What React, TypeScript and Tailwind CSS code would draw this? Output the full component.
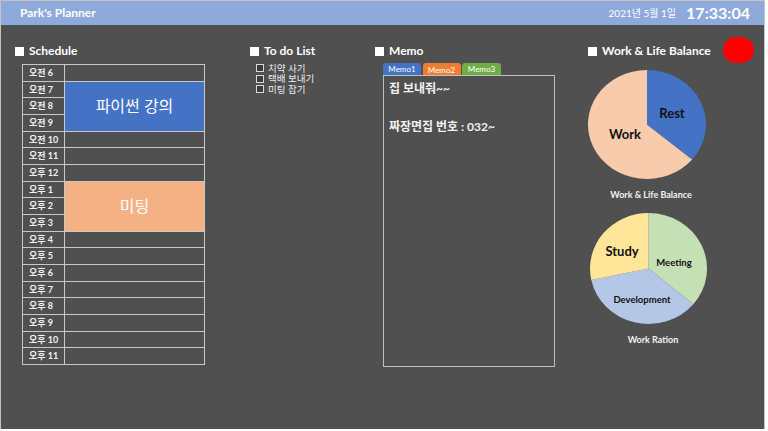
import React from "react";

const FONT = { fontFamily: 'Lato, "Noto Sans CJK KR", sans-serif' };

const times = [
  "오전 6", "오전 7", "오전 8", "오전 9", "오전 10", "오전 11", "오후 12",
  "오후 1", "오후 2", "오후 3", "오후 4", "오후 5", "오후 6", "오후 7",
  "오후 8", "오후 9", "오후 10", "오후 11",
];

function Heading({ text }: { text: string }) {
  return (
    <div className="flex h-[14px] items-center gap-[5px]">
      <div className="h-[9px] w-[9px] bg-white" />
      <span className="whitespace-nowrap text-[12px] font-bold leading-none text-white">{text}</span>
    </div>
  );
}

function Cell({ h = 1, children, className = "" }: { h?: number; children?: React.ReactNode; className?: string }) {
  return (
    <div
      className={`flex items-center justify-center border-b border-r border-[#c9c9c9] ${className}`}
      style={{ height: `${(50 / 3) * h}px` }}
    >
      {children}
    </div>
  );
}

function Schedule() {
  return (
    <div className="flex w-[249px] shrink-0 flex-col pl-[14px]">
      <Heading text="Schedule" />
      <div className="ml-[7px] mt-[6px] flex w-[183px] border-l border-t border-[#c9c9c9]">
        <div className="flex w-[42px] flex-col">
          {times.map((t) => (
            <div
              key={t}
              className="flex items-center border-b border-r border-[#c9c9c9] pl-[6px] text-[9px] font-bold text-[#f2f2f2]"
              style={{ height: `${50 / 3}px` }}
            >
              {t}
            </div>
          ))}
        </div>
        <div className="flex w-[140px] flex-col">
          <Cell />
          <Cell h={3} className="bg-[#4472c4]">
            <span className="text-[16px] text-white">파이썬 강의</span>
          </Cell>
          <Cell />
          <Cell />
          <Cell />
          <Cell h={3} className="bg-[#f4b183]">
            <span className="text-[16px] text-white">미팅</span>
          </Cell>
          {Array.from({ length: 8 }).map((_, i) => (
            <Cell key={i} />
          ))}
        </div>
      </div>
    </div>
  );
}

function Todo() {
  const items = ["치약 사기", "택배 보내기", "미팅 잡기"];
  return (
    <div className="flex w-[125px] shrink-0 flex-col">
      <Heading text="To do List" />
      <div className="ml-[6px] mt-[5px] flex flex-col">
        {items.map((it) => (
          <div key={it} className="flex h-[10.5px] items-center gap-[4px]">
            <div className="h-[8px] w-[8px] border border-[#d9d9d9] bg-[#3c3c3c]" />
            <span className="text-[9.5px] leading-none text-[#ededed]">{it}</span>
          </div>
        ))}
      </div>
    </div>
  );
}

function Memo() {
  return (
    <div className="flex w-[213px] shrink-0 flex-col">
      <Heading text="Memo" />
      <div className="ml-[8px] mt-[5px] flex gap-[1.5px]">
        <div className="flex h-[12px] w-[38px] items-center justify-center rounded-t-[3px] bg-[#4472c4] text-[8px] leading-none text-white">
          Memo1
        </div>
        <div className="flex h-[12px] w-[38px] items-end justify-center rounded-t-[3px] bg-[#ed7d31] pb-[1px] text-[8px] leading-none text-white">
          Memo2
        </div>
        <div className="flex h-[12px] w-[39px] items-center justify-center rounded-t-[3px] bg-[#70ad47] text-[8px] leading-none text-white">
          Memo3
        </div>
      </div>
      <div className="ml-[8px] h-[292px] w-[172px] border-[1.5px] border-[#bfbfbf] px-[5px] pt-[3px] text-[12px] font-bold leading-[19px] text-[#f2f2f2]">
        <div>집 보내줘~~</div>
        <div>&nbsp;</div>
        <div>짜장면집 번호 : 032~</div>
      </div>
    </div>
  );
}

function PieBalance() {
  return (
    <svg width="120" height="113" viewBox="0 0 120 113" style={FONT}>
      <path d="M60,56.5 L105.2,91.5 A59,54.5 0 1 1 60,2 Z" fill="#f8cbad" />
      <path d="M60,56.5 L60,2 A59,54.5 0 0 1 105.2,91.5 Z" fill="#4472c4" />
      <text x="85" y="45" textAnchor="middle" dominantBaseline="central" fontSize="13" fontWeight="700" fill="#111">
        Rest
      </text>
      <text x="38" y="66" textAnchor="middle" dominantBaseline="central" fontSize="13" fontWeight="700" fill="#111">
        Work
      </text>
    </svg>
  );
}

function PieWork() {
  return (
    <svg width="120" height="115" viewBox="0 0 120 115" style={FONT}>
      <path d="M59.5,57.5 L59.5,2 A58.5,55.5 0 0 1 104.3,93.2 Z" fill="#c5e0b4" />
      <path d="M59.5,57.5 L104.3,93.2 A58.5,55.5 0 0 1 2.3,69 Z" fill="#b4c7e7" />
      <path d="M59.5,57.5 L2.3,69 A58.5,55.5 0 0 1 59.5,2 Z" fill="#ffe699" />
      <text x="33" y="40" textAnchor="middle" dominantBaseline="central" fontSize="13" fontWeight="700" fill="#111">
        Study
      </text>
      <text x="85" y="51" textAnchor="middle" dominantBaseline="central" fontSize="9.5" fontWeight="700" fill="#111">
        Meeting
      </text>
      <text x="53" y="88" textAnchor="middle" dominantBaseline="central" fontSize="9.5" fontWeight="700" fill="#111">
        Development
      </text>
    </svg>
  );
}

function Balance() {
  return (
    <div className="flex min-w-0 flex-1 flex-col">
      <div className="flex h-[14px] items-start pr-[10px]">
        <Heading text="Work & Life Balance" />
        <div className="flex-1" />
        <div className="-mt-[7px] h-[26px] w-[31px] shrink-0 rounded-full bg-[#ff0000]" />
      </div>
      <div className="-ml-[5px] mt-[10px] flex w-[128px] flex-col items-center">
        <PieBalance />
        <div className="mt-[8px] whitespace-nowrap pl-[8px] text-[9px] font-bold leading-[12px] text-[#f2f2f2]">
          Work &amp; Life Balance
        </div>
      </div>
      <div className="-ml-[3px] mt-[10px] flex w-[128px] flex-col items-center">
        <PieWork />
        <div className="mt-[8px] pl-[8px] text-[9px] font-bold leading-[12px] text-[#f2f2f2]">Work Ration</div>
      </div>
    </div>
  );
}

export default function App() {
  return (
    <div className="h-[431px] w-[768px] bg-white" style={FONT}>
      <div className="flex h-[429px] w-[765px] flex-col border-l border-r border-t border-[#c4c4c4] bg-[#505050]">
        <div className="flex h-[24px] shrink-0 items-center bg-[#8eaadb] pl-[19px] pr-[14px]">
          <span className="text-[12px] font-bold text-white">Park's Planner</span>
          <div className="flex-1" />
          <span className="mr-[10px] mt-[1px] text-[10px] text-white">2021년 5월 1일</span>
          <span className="text-[16px] font-bold text-white">17:33:04</span>
        </div>
        <div className="flex pt-[19px]">
          <Schedule />
          <Todo />
          <Memo />
          <Balance />
        </div>
      </div>
    </div>
  );
}
